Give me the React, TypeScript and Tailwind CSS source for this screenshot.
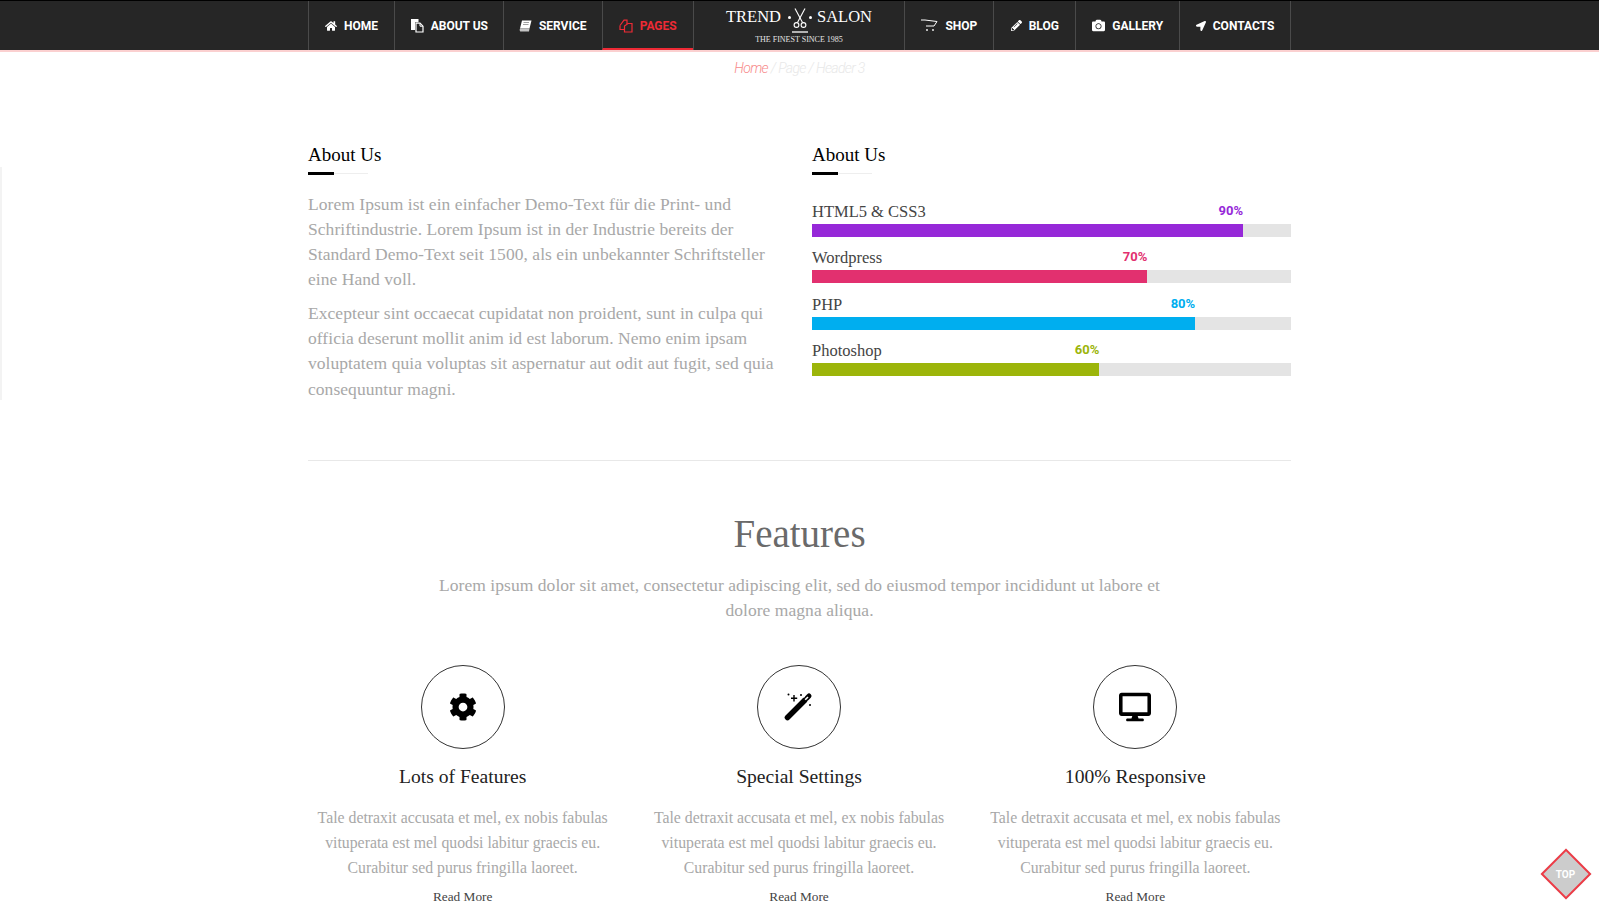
import React from 'react';
import { FaHome, FaPencilAlt, FaCamera, FaLocationArrow, FaCog, FaDesktop } from 'react-icons/fa';

const DocsIcon = () => (
  <svg width="14" height="15" viewBox="0 0 14 15">
    <path d="M1 1 H8.5 V4.2 H5 V12 H1 Z" fill="white" />
    <path d="M6 5.2 H10 L13 8.2 V14 H6 Z" fill="none" stroke="white" strokeWidth="1.2" />
    <path d="M10 5.2 V8.2 H13" fill="none" stroke="white" strokeWidth="1" />
  </svg>
);

const BookIcon = () => (
  <svg width="13" height="12" viewBox="0 0 13 12">
    <path d="M3 0.5 H12.5 L10.5 8.5 H1 Z" fill="white" />
    <path d="M1 8.5 H10.5 L10 11.5 H1.2 Q0 10 1 8.5 Z" fill="#c4c4c4" />
    <path d="M4.5 2.5 H10 M4 4.5 H9.5" stroke="#777777" strokeWidth="0.7" />
  </svg>
);

const PagesIcon = () => (
  <svg width="14" height="14" viewBox="0 0 14 14" fill="none" stroke="currentColor" strokeWidth="1.2">
    <path d="M1 6.5 L5 1.2 H8 V5" />
    <path d="M1 6.5 V10.5 H5" />
    <path d="M5.5 7 L9 4.5 H13 V13 H5.5 Z" />
  </svg>
);

const CartIcon = () => (
  <svg width="17" height="13" viewBox="0 0 17 13" fill="none" stroke="currentColor" strokeWidth="1">
    <path d="M0 1 H4 L16 2.5 L13 7 H5" />
    <circle cx="6" cy="11" r="0.9" fill="currentColor" stroke="none" />
    <circle cx="12" cy="11" r="0.9" fill="currentColor" stroke="none" />
  </svg>
);

const Scissors = () => (
  <svg width="16" height="25" viewBox="0 0 16 25" fill="none" stroke="white" strokeWidth="1.1">
    <path d="M3 0.5 L10.5 14.5" />
    <path d="M13 0.5 L5.5 14.5" />
    <circle cx="4.5" cy="17" r="2.4" />
    <circle cx="11.5" cy="17" r="2.4" />
    <path d="M0 24 H16" strokeWidth="1.3" />
  </svg>
);

const WandIcon = () => (
  <svg width="30" height="30" viewBox="0 0 30 30">
    <path d="M3.5 25.5 L20.5 8.5" stroke="black" strokeWidth="5.5" strokeLinecap="round" />
    <path d="M23 6 L25 4" stroke="black" strokeWidth="5" strokeLinecap="round" />
    <path d="M21.2 7.8 L24 5" stroke="white" strokeWidth="1.6" />
    <path d="M10 3 V9.5 M7 6.2 H13.2" stroke="black" strokeWidth="1.4" />
    <circle cx="4.5" cy="2.5" r="1" fill="black" />
    <circle cx="17" cy="3" r="1" fill="black" />
    <circle cx="26" cy="13" r="1" fill="black" />
  </svg>
);

const leftNav = [
  { label: 'Home', w: 'w-[86px]', icon: <FaHome size={12} /> },
  { label: 'About Us', w: 'w-[109px]', icon: <DocsIcon /> },
  { label: 'Service', w: 'w-[99px]', icon: <BookIcon /> },
  { label: 'Pages', w: 'w-[91px]', icon: <PagesIcon />, active: true },
];

const rightNav = [
  { label: 'Shop', w: 'w-[89px]', icon: <CartIcon /> },
  { label: 'Blog', w: 'w-[82px]', icon: <FaPencilAlt size={11} /> },
  { label: 'Gallery', w: 'w-[104px]', icon: <FaCamera size={13} /> },
  { label: 'Contacts', w: 'w-[111px]', icon: <FaLocationArrow size={10} /> },
];

const skills = [
  { name: 'HTML5 & CSS3', pct: 90, text: 'text-[#9628d8]', bar: 'bg-[#9628d8]' },
  { name: 'Wordpress', pct: 70, text: 'text-[#e2306f]', bar: 'bg-[#e2306f]' },
  { name: 'PHP', pct: 80, text: 'text-[#00aeef]', bar: 'bg-[#00aeef]' },
  { name: 'Photoshop', pct: 60, text: 'text-[#9cb50a]', bar: 'bg-[#9cb50a]' },
];

const features = [
  { title: 'Lots of Features', icon: <FaCog size={28} /> },
  { title: 'Special Settings', icon: <WandIcon /> },
  { title: '100% Responsive', icon: <FaDesktop size={32} /> },
];

const NavItem = ({ item }: { item: (typeof leftNav)[number] }) => (
  <a
    className={`${item.w} flex items-center justify-center gap-[7px] border-l border-[#4a4a4a] text-[12px] font-bold uppercase ${
      item.active ? 'border-b-2 border-b-[#ee2a35] pt-[2px] text-[#ee2a35]' : 'text-white'
    }`}
  >
    {item.icon}
    <span>{item.label}</span>
  </a>
);

const Heading = ({ children }: { children: React.ReactNode }) => (
  <div>
    <h3 className="text-[19px] leading-[24px] text-black">{children}</h3>
    <div className="mt-[5px] flex items-center">
      <div className="h-[3px] w-[26px] bg-black" />
      <div className="h-px w-[34px] bg-[#eeeeee]" />
    </div>
  </div>
);

const App: React.FC = () => {
  return (
    <div className="relative h-[907px] overflow-hidden bg-white font-['Liberation_Serif',serif]">
      <div className="absolute left-0 top-[167px] h-[233px] w-[2px] bg-[#f3f3f3]" />

      <header className="h-[52px] border-t border-b-2 border-t-black border-b-[#fbd0d0] bg-[#262626] font-['Roboto',sans-serif]">
        <nav className="mx-auto flex h-[49px] w-[983px]">
          {leftNav.map((item) => (
            <NavItem key={item.label} item={item} />
          ))}
          <div className="flex w-[212px] flex-col items-center border-l border-[#4a4a4a] pt-[7px] font-['Liberation_Serif',serif] text-white">
            <div className="flex h-[25px] items-center text-[16.5px] leading-none">
              <span className="-mt-[7px]">TREND</span>
              <span className="-mt-[7px] ml-[7px] mr-px h-[3px] w-[3px] rounded-full bg-white" />
              <Scissors />
              <span className="-mt-[7px] ml-px mr-[5px] h-[3px] w-[3px] rounded-full bg-white" />
              <span className="-mt-[7px]">SALON</span>
            </div>
            <div className="mt-[2px] text-[8px] leading-[10px] text-[#e4e4e4]">THE FINEST SINCE 1985</div>
          </div>
          {rightNav.map((item) => (
            <NavItem key={item.label} item={item} />
          ))}
          <div className="border-l border-[#4a4a4a]" />
        </nav>
      </header>

      <div className="pt-[7px] text-center font-['Roboto',sans-serif] text-[14px] font-light italic leading-[18px] tracking-[-0.65px] text-[#e8e8e8]">
        <span className="text-[#f78a8a]">Home</span> / Page / Header 3
      </div>

      <main className="mx-auto w-[983px]">
        <section className="mt-[66px] grid grid-cols-[479px_479px] gap-[25px] border-b border-[#e8e8e8] pb-[58px]">
          <div>
            <Heading>About Us</Heading>
            <div className="mt-[17px] w-[470px] text-[17.5px] leading-[25.15px] tracking-[0.05px] text-[#a8a8a8]">
              <p>
                Lorem Ipsum ist ein einfacher Demo-Text für die Print- und Schriftindustrie. Lorem Ipsum ist in der
                Industrie bereits der Standard Demo-Text seit 1500, als ein unbekannter Schriftsteller eine Hand voll.
              </p>
              <p className="mt-[8.5px]">
                Excepteur sint occaecat cupidatat non proident, sunt in culpa qui officia deserunt mollit anim id est
                laborum. Nemo enim ipsam voluptatem quia voluptas sit aspernatur aut odit aut fugit, sed quia
                consequuntur magni.
              </p>
            </div>
          </div>
          <div>
            <Heading>About Us</Heading>
            <div className="mt-[27px] flex flex-col gap-[11.3px]">
              {skills.map((s) => (
                <div key={s.name}>
                  <div className="relative h-[22px] text-[16.5px] leading-[20px] text-[#444444]">
                    {s.name}
                    <span
                      className={`absolute top-[-1px] -translate-x-full font-['Roboto',sans-serif] text-[13px] font-bold ${s.text}`}
                      style={{ left: `${s.pct}%` }}
                    >
                      {s.pct}%
                    </span>
                  </div>
                  <div className="h-[13px] bg-[#e4e4e4]">
                    <div className={`h-full ${s.bar}`} style={{ width: `${s.pct}%` }} />
                  </div>
                </div>
              ))}
            </div>
          </div>
        </section>

        <section className="pt-[50px] text-center">
          <h2 className="text-[39px] leading-[46px] text-[#6a6a6a]">Features</h2>
          <p className="mx-auto mt-[16px] w-[730px] text-[17.5px] leading-[25.15px] tracking-[0.05px] text-[#a8a8a8]">
            Lorem ipsum dolor sit amet, consectetur adipiscing elit, sed do eiusmod tempor incididunt ut labore et
            dolore magna aliqua.
          </p>
          <div className="-ml-[13.5px] -mr-[12.5px] mt-[42px] grid grid-cols-3">
            {features.map((f) => (
              <div key={f.title} className="flex flex-col items-center px-[10px]">
                <div className="flex h-[84px] w-[84px] items-center justify-center rounded-full border border-[#333333] text-black">
                  {f.icon}
                </div>
                <h4 className="mt-[16px] text-[19.6px] leading-[24px] text-[#222222]">{f.title}</h4>
                <p className="mt-[16px] text-[15.8px] leading-[25.15px] text-[#a8a8a8]">
                  Tale detraxit accusata et mel, ex nobis fabulas vituperata est mel quodsi labitur graecis eu.
                  Curabitur sed purus fringilla laoreet.
                </p>
                <a className="mt-[6px] text-[13.3px] leading-[20px] text-[#444444]">Read More</a>
              </div>
            ))}
          </div>
        </section>
      </main>

      <a className="absolute bottom-[15px] right-[15px] flex h-[36px] w-[36px] rotate-45 items-center justify-center border-2 border-[#ee3b46] bg-[#cccccc]">
        <span className="-rotate-45 font-['Roboto',sans-serif] text-[10px] font-bold text-white">TOP</span>
      </a>
    </div>
  );
};

export default App;
